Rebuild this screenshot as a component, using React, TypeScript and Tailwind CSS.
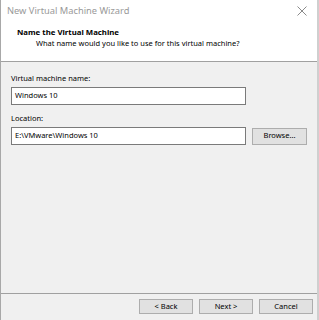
import React from 'react'

export default function App() {
  return (
    <div className="w-[319px] h-[320px] bg-[#cfcfcf] overflow-hidden flex" style={{ fontFamily: '"Noto Sans", "Open Sans", sans-serif' }}>
      <div className="w-[317px] h-full bg-white border-l border-[#a8a8a8] flex flex-col">
        {/* title bar */}
        <div className="h-[23px] flex items-center justify-between pl-[6px] pr-[9px] text-[#999999] text-[9.3px]">
          <span className="-mt-[1px]">New Virtual Machine Wizard</span>
          <svg width="10" height="10" viewBox="0 0 10 10" className="mr-[1px] -mt-[1px]">
            <path d="M0.5 0.5 L9.5 9.5 M9.5 0.5 L0.5 9.5" stroke="#8a8a8a" strokeWidth="1" />
          </svg>
        </div>

        {/* header */}
        <div className="h-[38px] pl-[16px] pt-[4px] text-[7.5px] text-black leading-[11px]">
          <div className="font-bold text-[7.8px]">Name the Virtual Machine</div>
          <div className="pl-[19px]">What name would you like to use for this virtual machine?</div>
        </div>
        <div className="border-t border-[#a0a0a0]" />

        {/* body */}
        <div className="flex-1 bg-[#f0f0f0] px-[10px] pt-[11px] text-[7.5px] text-black">
          <div className="leading-[10px] mb-[4px]">Virtual machine name:</div>
          <div className="w-[235px] h-[18px] bg-white border border-[#7a7a7a] flex items-center px-[3px]">
            Windows 10
          </div>
          <div className="leading-[10px] mt-[8px] mb-[4px]">Location:</div>
          <div className="flex items-center gap-[6px]">
            <div className="w-[235px] h-[18px] bg-white border border-[#7a7a7a] flex items-center px-[3px]">
              E:\VMware\Windows 10
            </div>
            <div className="w-[55px] h-[17px] bg-[#e1e1e1] border border-[#adadad] flex items-center justify-center">
              Browse...
            </div>
          </div>
        </div>

        {/* footer */}
        <div className="border-t border-[#a0a0a0]" />
        <div className="h-[26px] bg-[#f0f0f0] flex justify-end gap-[6px] pr-[4px] pt-[5px] text-[7.5px] text-black">
          <div className="w-[54px] h-[15px] bg-[#e1e1e1] border border-[#adadad] flex items-center justify-center">&lt; Back</div>
          <div className="w-[54px] h-[15px] bg-[#e1e1e1] border border-[#adadad] flex items-center justify-center">Next &gt;</div>
          <div className="w-[54px] h-[15px] bg-[#e1e1e1] border border-[#adadad] flex items-center justify-center">Cancel</div>
        </div>
      </div>
    </div>
  )
}
